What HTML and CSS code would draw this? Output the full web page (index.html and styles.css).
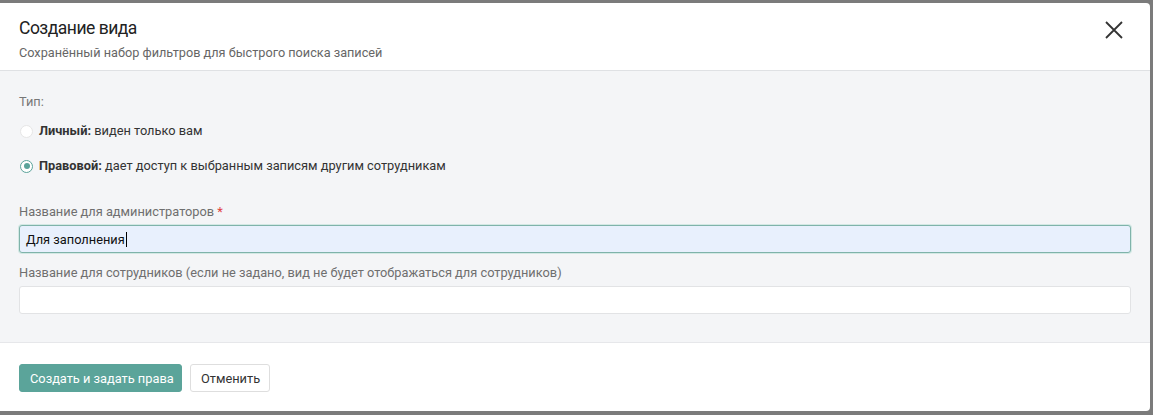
FILE: index.html
```html
<!DOCTYPE html>
<html lang="ru">
<head>
<meta charset="utf-8">
<title>Создание вида</title>
<link rel="stylesheet" href="styles.css">
</head>
<body>
<div class="backdrop">
  <div class="modal">
    <header class="modal-header">
      <div class="header-text">
        <h1 class="title">Создание вида</h1>
        <p class="subtitle">Сохранённый набор фильтров для быстрого поиска записей</p>
      </div>
      <button class="close" aria-label="Закрыть">
        <svg width="20" height="20" viewBox="0 0 20 20"><path d="M2 2 L18 18 M18 2 L2 18" stroke="#333" stroke-width="1.8" fill="none"/></svg>
      </button>
    </header>
    <section class="modal-body">
      <div class="type-label">Тип:</div>
      <label class="radio-row">
        <span class="radio"></span>
        <span><b>Личный:</b> виден только вам</span>
      </label>
      <label class="radio-row">
        <span class="radio checked"></span>
        <span><b>Правовой:</b> дает доступ к выбранным записям другим сотрудникам</span>
      </label>
      <div class="field-group first">
        <div class="field-label">Название для администраторов <span class="req">*</span></div>
        <div class="input focused"><span>Для заполнения</span><span class="caret"></span></div>
      </div>
      <div class="field-group">
        <div class="field-label">Название для сотрудников (если не задано, вид не будет отображаться для сотрудников)</div>
        <div class="input"></div>
      </div>
    </section>
    <footer class="modal-footer">
      <button class="btn btn-primary">Создать и задать права</button>
      <button class="btn btn-default">Отменить</button>
    </footer>
  </div>
</div>
</body>
</html>
```
FILE: styles.css
```css
* { box-sizing: border-box; }
html, body { margin: 0; padding: 0; }
body {
  background: #7b7b7b;
  font-family: Roboto, "Noto Sans", sans-serif;
  color: #333;
  width: 1153px;
  height: 415px;
  overflow: hidden;
}
.backdrop {
  padding: 3px 3px 4px 0;
  height: 415px;
}
.modal {
  background: #fff;
  height: 408px;
  border-radius: 0 4px 4px 0;
  display: flex;
  flex-direction: column;
  overflow: hidden;
}
.modal-header {
  display: flex;
  justify-content: space-between;
  align-items: flex-start;
  padding: 13px 20px 0 19px;
  height: 68px;
  border-bottom: 1px solid #dfe1e4;
}
.title {
  margin: 0;
  font-size: 17.5px;
  letter-spacing: -0.5px;
  font-weight: 400;
  line-height: 24px;
  color: #222;
}
.subtitle {
  margin: 5px 0 0;
  font-size: 12.7px;
  line-height: 16px;
  color: #666;
}
.close {
  border: 0;
  background: none;
  padding: 0;
  margin: 4px 6px 0 0;
  width: 20px;
  height: 20px;
  cursor: pointer;
}
.modal-body {
  background: #f4f5f7;
  padding: 23px 19px 0 19px;
  height: 272px;
  border-bottom: 1px solid #e6e7ea;
}
.type-label {
  font-size: 12.8px;
  color: #777;
  line-height: 16px;
}
.radio-row {
  display: flex;
  align-items: center;
  gap: 6px;
  font-size: 12.8px;
  line-height: 16px;
  color: #333;
  margin-top: 13px;
}
.radio-row + .radio-row { margin-top: 19px; }
.radio-row b { font-weight: 700; }
.radio {
  width: 13px;
  height: 13px;
  border-radius: 50%;
  background: #fff;
  border: 1px solid #e6e6e6;
  margin-left: 1px;
  flex: none;
}
.radio.checked {
  border: 1px solid #5aa39a;
  position: relative;
}
.radio.checked::after {
  content: "";
  position: absolute;
  left: 2.5px;
  top: 2.5px;
  width: 6px;
  height: 6px;
  border-radius: 50%;
  background: #5aa39a;
}
.field-group.first { margin-top: 30px; }
.field-group { margin-top: 12px; }
.field-label {
  font-size: 12.8px;
  line-height: 16px;
  color: #6f6f6f;
  margin-bottom: 5px;
}
.req { color: #e04040; }
.input {
  height: 28px;
  background: #fff;
  border: 1px solid #e2e3e5;
  border-radius: 3px;
  font-size: 12.8px;
  line-height: 25px;
  padding: 0 6px;
  color: #111;
  display: flex;
  align-items: center;
}
.input.focused {
  background: #e8f0fd;
  border-color: #7fb3aa;
  box-shadow: 0 0 0 1px #d3e8e4;
}
.caret {
  display: inline-block;
  width: 1px;
  height: 15px;
  background: #000;
  margin-left: 1px;
}
.modal-footer {
  flex: 1;
  display: flex;
  align-items: flex-start;
  gap: 8px;
  padding: 21px 19px 0;
}
.btn {
  font-family: inherit;
  font-size: 12.8px;
  height: 28px;
  border-radius: 3px;
  padding: 0 10px;
  white-space: nowrap;
  cursor: pointer;
}
.btn-primary {
  background: #5ba49a;
  color: #fff;
  border: 1px solid #5ba49a;
  width: 163px;
}
.btn-default {
  background: #fff;
  color: #333;
  border: 1px solid #dedede;
  width: 80px;
}
```
